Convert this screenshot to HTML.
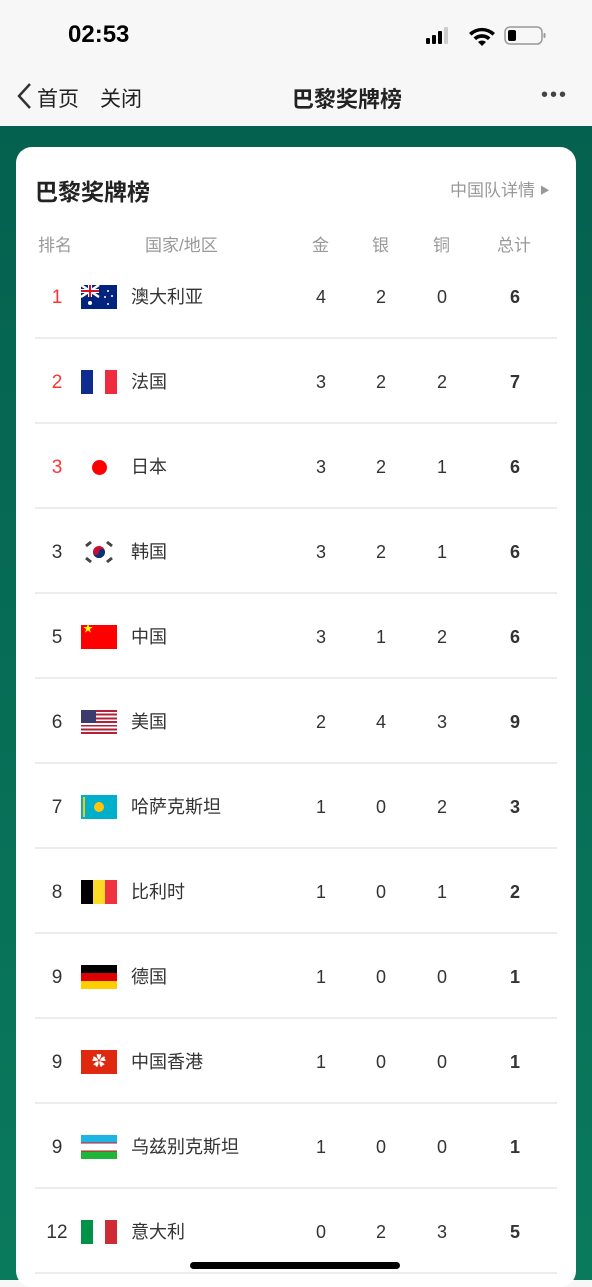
<!DOCTYPE html>
<html><head><meta charset="utf-8"><style>
*{margin:0;padding:0;box-sizing:border-box}
body{width:592px;height:1280px;overflow:hidden;font-family:"Liberation Sans","Noto Sans CJK SC",sans-serif;background:#f7f7f7;position:relative}
.abs{position:absolute}
.bg{left:0;top:126px;width:592px;height:1154px;background:linear-gradient(#04614f,#0a7a5d)}
.card{left:16px;top:147px;width:560px;height:1140px;background:#fff;border-radius:16px}
.row{position:absolute;left:35px;width:522px;height:85px;border-bottom:2px solid #ececec}
.row span{position:absolute;top:1px;line-height:85px;font-size:18px;color:#333}
.rk{left:0;width:44px;text-align:center;font-size:19px !important}
.red{color:#f33 !important}
.flag{position:absolute;left:46px;top:31px;width:36px;height:24px;overflow:hidden}
.nm{left:96px}
.g{left:276px;width:20px;text-align:center}
.s{left:336px;width:20px;text-align:center}
.b{left:397px;width:20px;text-align:center}
.t{left:470px;width:20px;text-align:center;font-weight:bold}
.hd{position:absolute;top:231px;font-size:17px;color:#999}
</style></head><body>
<div class="abs" style="left:68px;top:21px;font-size:24px;font-weight:bold;color:#000">02:53</div>
<div class="abs" style="left:426px;top:25px">
<svg width="120" height="22"><g fill="#000"><rect x="0" y="13" width="4" height="6" rx="1"/><rect x="6" y="10" width="4" height="9" rx="1"/><rect x="12" y="6" width="4" height="13" rx="1"/></g><rect x="18" y="2" width="4" height="17" rx="1" fill="#ccc"/>
<path d="M43 8a19 19 0 0 1 26 0l-2.5 2.6a15 15 0 0 0-21 0z M47.5 12.5a12.5 12.5 0 0 1 17 0l-2.6 2.6a9 9 0 0 0-11.8 0z M52 17a6 6 0 0 1 8 0l-4 4z" fill="#000"/>
<rect x="79" y="2" width="37" height="17" rx="5" fill="none" stroke="#999" stroke-width="1.5"/><rect x="82" y="5" width="8" height="11" rx="2" fill="#000"/><rect x="117.5" y="8" width="2" height="5" rx="1" fill="#999"/></svg></div>
<svg class="abs" style="left:14px;top:82px" width="20" height="28"><path d="M16 2L5 14l11 12" fill="none" stroke="#333" stroke-width="2.5"/></svg>
<div class="abs" style="left:37px;top:83px;font-size:21px;color:#222">首页</div>
<div class="abs" style="left:100px;top:83px;font-size:21px;color:#222">关闭</div>
<div class="abs" style="left:292px;top:82px;font-size:22px;font-weight:bold;color:#222">巴黎奖牌榜</div>
<div class="abs" style="left:541px;top:84px;font-size:20px;color:#444;letter-spacing:2px">•••</div>
<div class="abs bg"></div>
<div class="abs card"></div>
<div class="abs" style="left:35px;top:173px;font-size:23px;font-weight:bold;color:#222">巴黎奖牌榜</div>
<div class="abs" style="left:450px;top:176px;font-size:17px;color:#999">中国队详情 <span style="font-size:10px;position:relative;top:-2px">▶</span></div>
<div class="hd" style="left:38px">排名</div>
<div class="hd" style="left:145px">国家/地区</div>
<div class="hd" style="left:312px">金</div>
<div class="hd" style="left:372px">银</div>
<div class="hd" style="left:433px">铜</div>
<div class="hd" style="left:497px">总计</div>

<div class="row" style="top:254px"><span class="rk red">1</span><div class="flag" style="background:#00247d"><svg width="36" height="24"><path d="M0 0L18 12M18 0L0 12" stroke="#fff" stroke-width="2.5"/><path d="M9 0v12M0 6h18" stroke="#fff" stroke-width="4"/><path d="M9 0v12M0 6h18" stroke="#cf142b" stroke-width="2"/><g fill="#fff"><circle cx="9" cy="18" r="2"/><circle cx="27" cy="6" r="1"/><circle cx="31" cy="11" r="1"/><circle cx="24" cy="12" r="1"/><circle cx="27" cy="19" r="1"/></g></svg></div><span class="nm">澳大利亚</span><span class="g">4</span><span class="s">2</span><span class="b">0</span><span class="t">6</span></div>
<div class="row" style="top:339px"><span class="rk red">2</span><div class="flag" style="background:linear-gradient(90deg,#0e2b8f 33%,#fff 33%,#fff 67%,#ef2b3d 67%)"></div><span class="nm">法国</span><span class="g">3</span><span class="s">2</span><span class="b">2</span><span class="t">7</span></div>
<div class="row" style="top:424px"><span class="rk red">3</span><div class="flag" style="background:#fff"><div class="abs" style="left:11px;top:5px;width:15px;height:15px;border-radius:50%;background:#f00"></div></div><span class="nm">日本</span><span class="g">3</span><span class="s">2</span><span class="b">1</span><span class="t">6</span></div>
<div class="row" style="top:509px"><span class="rk">3</span><div class="flag" style="background:#fff"><svg width="36" height="24"><circle cx="18" cy="12" r="6" fill="#c60c30"/><path d="M12 12a6 6 0 0 0 12 0a3 3 0 0 0-6 0a3 3 0 0 1-6 0z" fill="#003478"/><g stroke="#444" stroke-width="3"><path d="M5 6l5-4M26 2l5 4M5 18l5 4M26 22l5-4"/></g></svg></div><span class="nm">韩国</span><span class="g">3</span><span class="s">2</span><span class="b">1</span><span class="t">6</span></div>
<div class="row" style="top:594px"><span class="rk">5</span><div class="flag" style="background:#f00"><span style="position:absolute;left:2px;top:-1px;font-size:10px;line-height:12px;color:#ff0">★</span></div><span class="nm">中国</span><span class="g">3</span><span class="s">1</span><span class="b">2</span><span class="t">6</span></div>
<div class="row" style="top:679px"><span class="rk">6</span><div class="flag" style="background:repeating-linear-gradient(#b22234 0 1.85px,#fff 1.85px 3.7px)"><div class="abs" style="left:0;top:0;width:15px;height:13px;background:#3c3b6e"></div></div><span class="nm">美国</span><span class="g">2</span><span class="s">4</span><span class="b">3</span><span class="t">9</span></div>
<div class="row" style="top:764px"><span class="rk">7</span><div class="flag" style="background:#00afca"><div class="abs" style="left:13px;top:7px;width:10px;height:10px;border-radius:50%;background:#fec50c"></div><div class="abs" style="left:2px;top:2px;width:2px;height:20px;background:#fec50c"></div></div><span class="nm">哈萨克斯坦</span><span class="g">1</span><span class="s">0</span><span class="b">2</span><span class="t">3</span></div>
<div class="row" style="top:849px"><span class="rk">8</span><div class="flag" style="background:linear-gradient(90deg,#000 33%,#fdda24 33%,#fdda24 67%,#ef3340 67%)"></div><span class="nm">比利时</span><span class="g">1</span><span class="s">0</span><span class="b">1</span><span class="t">2</span></div>
<div class="row" style="top:934px"><span class="rk">9</span><div class="flag" style="background:linear-gradient(#000 33%,#dd0000 33%,#dd0000 67%,#ffce00 67%)"></div><span class="nm">德国</span><span class="g">1</span><span class="s">0</span><span class="b">0</span><span class="t">1</span></div>
<div class="row" style="top:1019px"><span class="rk">9</span><div class="flag" style="background:#de2910"><span style="position:absolute;left:11px;top:1px;font-size:14px;line-height:20px;color:#fff">✿</span></div><span class="nm">中国香港</span><span class="g">1</span><span class="s">0</span><span class="b">0</span><span class="t">1</span></div>
<div class="row" style="top:1104px"><span class="rk">9</span><div class="flag" style="background:linear-gradient(#1eb5e5 0 7.5px,#ce1126 7.5px 8.5px,#fff 8.5px 15.5px,#ce1126 15.5px 16.5px,#1eb53a 16.5px)"></div><span class="nm">乌兹别克斯坦</span><span class="g">1</span><span class="s">0</span><span class="b">0</span><span class="t">1</span></div>
<div class="row" style="top:1189px"><span class="rk">12</span><div class="flag" style="background:linear-gradient(90deg,#009246 33%,#fff 33%,#fff 67%,#ce2b37 67%)"></div><span class="nm">意大利</span><span class="g">0</span><span class="s">2</span><span class="b">3</span><span class="t">5</span></div>
<div class="abs" style="left:190px;top:1262px;width:210px;height:7px;border-radius:4px;background:#000"></div>
</body></html>
